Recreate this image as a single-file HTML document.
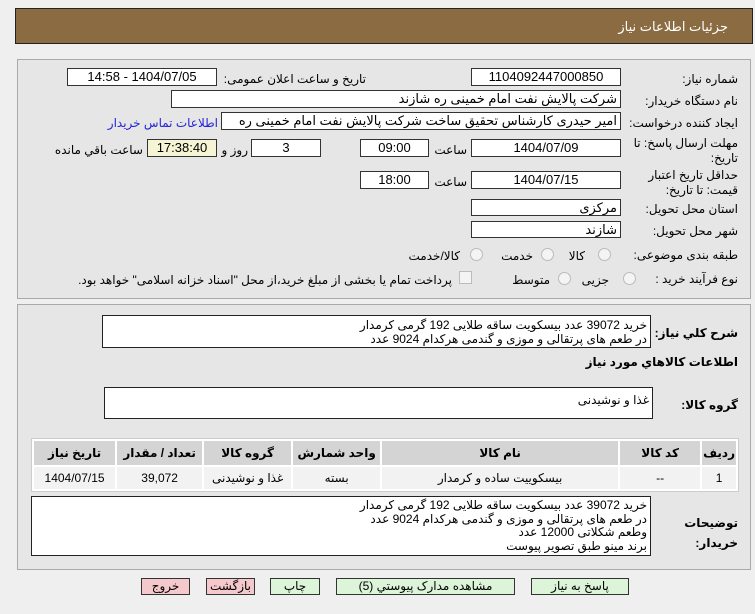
<!DOCTYPE html>
<html><head><meta charset="utf-8"><style>
body{margin:0;width:755px;height:614px;background:#efefef;font-family:"Liberation Sans","DejaVu Sans",sans-serif;font-size:12px;color:#000;position:relative;overflow:hidden;direction:rtl}
.a{position:absolute;white-space:nowrap}
.hd{left:15px;top:8px;width:736px;height:34px;background:#8b6b42;border:1px solid #222}
.hd span{position:absolute;right:24px;top:10px;color:#fff;font-size:13px}
.pn{position:absolute;border:1px solid #aaa;background:#e6e6e6}
.in{position:absolute;background:#fff;border:1px solid #333;box-sizing:border-box;text-align:center;line-height:16px;font-size:13px;overflow:hidden}
.tx{text-align:right;padding-right:3px}
.l{position:absolute;white-space:nowrap;text-align:right}
.rad{position:absolute;width:11px;height:11px;border-radius:50%;border:1px solid #bbb;background:#f4f4f4}
table{position:absolute;border-collapse:separate;border-spacing:2px;background:#fff;border:1px solid #ccc}
th{background:#d4d4d4;font-weight:bold;height:22px;font-size:12px}
td{background:#f2f2f2;height:20px;text-align:center;font-size:12px}
.b{position:absolute;top:578px;height:17px;border:1px solid #333;box-sizing:border-box;text-align:center;line-height:15px;font-size:12px}
.g{background:#dcf5d8}.p{background:#f5c8cc}
.ta{position:absolute;background:#fff;border:1px solid #222;box-sizing:border-box;text-align:right;padding:2px 3px;line-height:14px;font-size:12px}
</style></head><body>
<div class="a hd"><span>جزئیات اطلاعات نیاز</span></div>
<div class="pn" style="left:17px;top:59px;width:732px;height:238px"></div>
<div class="pn" style="left:17px;top:304px;width:732px;height:264px"></div>

<div class="l" style="right:17px;top:72px">شماره نیاز:</div>
<div class="in" style="left:471px;top:68px;width:150px;height:18px">1104092447000850</div>
<div class="l" style="right:389px;top:72px">تاريخ و ساعت اعلان عمومی:</div>
<div class="in" style="left:67px;top:68px;width:150px;height:18px">1404/07/05 - 14:58</div>

<div class="l" style="right:17px;top:94px">نام دستگاه خریدار:</div>
<div class="in tx" style="left:171px;top:90px;width:450px;height:18px">شرکت پالایش نفت امام خمینی  ره  شازند</div>

<div class="l" style="right:17px;top:116px">ایجاد کننده درخواست:</div>
<div class="in tx" style="left:221px;top:112px;width:400px;height:18px">امیر  حیدری کارشناس تحقیق ساخت شرکت پالایش نفت امام خمینی  ره  شازند</div>
<div class="l" style="right:537px;top:116px;color:#2323d8">اطلاعات تماس خریدار</div>

<div class="l" style="right:17px;top:136px;line-height:15px">مهلت ارسال پاسخ: تا<br>تاریخ:</div>
<div class="in" style="left:471px;top:139px;width:150px;height:18px">1404/07/09</div>
<div class="l" style="right:288px;top:143px">ساعت</div>
<div class="in" style="left:360px;top:139px;width:69px;height:18px">09:00</div>
<div class="in" style="left:251px;top:139px;width:70px;height:18px">3</div>
<div class="l" style="right:507px;top:143px">روز و</div>
<div class="in" style="left:147px;top:139px;width:70px;height:18px;background:#f5f5d5">17:38:40</div>
<div class="l" style="right:612px;top:143px">ساعت باقي مانده</div>

<div class="l" style="right:17px;top:168px;line-height:15px">حداقل تاریخ اعتبار<br>قیمت: تا تاریخ:</div>
<div class="in" style="left:471px;top:171px;width:150px;height:18px">1404/07/15</div>
<div class="l" style="right:288px;top:175px">ساعت</div>
<div class="in" style="left:360px;top:171px;width:69px;height:18px">18:00</div>

<div class="l" style="right:17px;top:202px">استان محل تحویل:</div>
<div class="in tx" style="left:471px;top:199px;width:150px;height:17px">مرکزی</div>
<div class="l" style="right:17px;top:224px">شهر محل تحویل:</div>
<div class="in tx" style="left:471px;top:221px;width:150px;height:17px">شازند</div>

<div class="l" style="right:17px;top:248px">طبقه بندی موضوعی:</div>
<div class="rad" style="left:598px;top:248px"></div><div class="l" style="right:170px;top:249px">کالا</div>
<div class="rad" style="left:541px;top:248px"></div><div class="l" style="right:222px;top:249px">خدمت</div>
<div class="rad" style="left:470px;top:248px"></div><div class="l" style="right:295px;top:249px">کالا/خدمت</div>

<div class="l" style="right:17px;top:272px">نوع فرآیند خرید :</div>
<div class="rad" style="left:623px;top:272px"></div><div class="l" style="right:146px;top:273px">جزیی</div>
<div class="rad" style="left:558px;top:272px"></div><div class="l" style="right:205px;top:273px">متوسط</div>
<div style="position:absolute;left:459px;top:271px;width:11px;height:11px;border:1px solid #bbb;background:#f4f4f4"></div>
<div class="l" style="right:303px;top:273px">پرداخت تمام یا بخشی از مبلغ خرید،از محل "اسناد خزانه اسلامی" خواهد بود.</div>

<div class="l" style="right:17px;top:326px;font-weight:bold">شرح كلي نياز:</div>
<div class="ta" style="left:102px;top:315px;width:549px;height:33px">خرید 39072 عدد بیسکویت ساقه طلایی 192 گرمی کرمدار<br>در طعم های پرتقالی و موزی و گندمی هرکدام 9024 عدد</div>
<div class="l" style="right:17px;top:355px;font-weight:bold">اطلاعات كالاهاي مورد نياز</div>
<div class="l" style="right:17px;top:398px;font-weight:bold">گروه کالا:</div>
<div class="ta" style="left:104px;top:387px;width:549px;height:32px;padding-top:5px">غذا و نوشیدنی</div>

<table style="left:31px;top:438px;width:708px">
<tr><th style="width:26px">ردیف</th><th style="width:78px">کد کالا</th><th style="width:234px">نام کالا</th><th style="width:85px">واحد شمارش</th><th style="width:85px">گروه کالا</th><th style="width:83px">تعداد / مقدار</th><th>تاریخ نیاز</th></tr>
<tr><td>1</td><td>--</td><td>بیسکوییت ساده و کرمدار</td><td>بسته</td><td>غذا و نوشیدنی</td><td>39,072</td><td>1404/07/15</td></tr>
</table>

<div class="l" style="right:17px;top:513px;font-weight:bold;line-height:20px">توضیحات<br>خریدار:</div>
<div class="ta" style="left:31px;top:496px;width:620px;height:60px;line-height:13.5px">خرید 39072 عدد بیسکویت ساقه طلایی 192 گرمی کرمدار<br>در طعم های پرتقالی و موزی و گندمی هرکدام 9024 عدد<br>وطعم شکلاتی 12000 عدد<br>برند مینو طبق تصویر پیوست</div>

<div class="b g" style="left:531px;width:98px">پاسخ به نیاز</div>
<div class="b g" style="left:336px;width:179px">مشاهده مدارک پیوستي (5)</div>
<div class="b g" style="left:270px;width:50px">چاپ</div>
<div class="b p" style="left:206px;width:49px">بازگشت</div>
<div class="b p" style="left:141px;width:49px">خروج</div>
</body></html>
